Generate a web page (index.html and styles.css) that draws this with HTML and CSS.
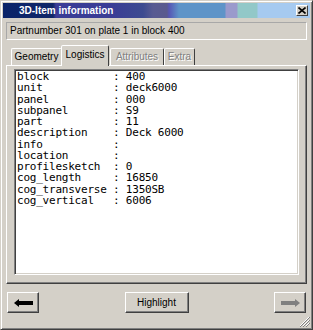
FILE: index.html
```html
<!DOCTYPE html>
<html lang="en">
<head>
    <meta charset="UTF-8">
    <title>3D-Item information</title>
    <link rel="stylesheet" href="styles.css">
</head>
<body>
<div class="window">
    <div class="titlebar">
        <span class="title">3D-Item information</span>
        <button class="close">
            <svg width="8" height="7" viewBox="0 0 8 7"><path d="M0.5 0.5 L7.5 6.5 M7.5 0.5 L0.5 6.5" stroke="#000" stroke-width="1.6"/></svg>
        </button>
    </div>
    <div class="content">
        <div class="status">Partnumber 301 on plate 1 in block 400</div>
        <div class="tabs">
            <div class="tab tab-geometry">Geometry</div>
            <div class="tab tab-logistics active">Logistics</div>
            <div class="tab tab-attributes disabled">Attributes</div>
            <div class="tab tab-extra disabled">Extra</div>
        </div>
        <div class="panel">
<pre class="list">block          : 400
unit           : deck6000
panel          : 000
subpanel       : S9
part           : 11
description    : Deck 6000
info           :
location       :
profilesketch  : 0
cog_length     : 16850
cog_transverse : 1350SB
cog_vertical   : 6006</pre>
        </div>
        <div class="buttons">
            <button class="btn btn-arrow">
                <svg width="19" height="8" viewBox="0 0 19 8"><path d="M0 4 L5 0 L5 2 L19 2 L19 6 L5 6 L5 8 Z" fill="#000"/></svg>
            </button>
            <button class="btn btn-text">Highlight</button>
            <button class="btn btn-arrow">
                <svg width="19" height="8" viewBox="0 0 19 8"><path d="M19 4 L14 0 L14 2 L0 2 L0 6 L14 6 L14 8 Z" fill="#808080"/></svg>
            </button>
        </div>
    </div>
    <div class="grip">
        <svg width="11" height="11" viewBox="0 0 11 11">
            <path d="M10 1 L1 10 M10 4 L4 10 M10 7 L7 10" stroke="#fff" stroke-width="1"/>
            <path d="M11 1 L1 11 M11 4 L4 11 M11 7 L7 11" stroke="#808080" stroke-width="1"/>
        </svg>
    </div>
</div>
</body>
</html>
```
FILE: styles.css
```css
* {
    margin: 0;
    padding: 0;
    box-sizing: border-box;
}
body {
    background: #d4d0c8;
    font-family: "Liberation Sans", Arial, sans-serif;
    font-size: 10px;
}
.window {
    position: relative;
    width: 313px;
    height: 330px;
    background: #d4d0c8;
    border: 1px solid;
    border-color: #d4d0c8 #404040 #404040 #d4d0c8;
    box-shadow: inset 1px 1px 0 #fff, inset -1px -1px 0 #808080;
    padding: 2px;
    display: flex;
    flex-direction: column;
}
.titlebar {
    height: 15px;
    display: flex;
    align-items: center;
    justify-content: space-between;
    padding: 0 2px 0 16px;
    background: linear-gradient(to right, #0a246a 0, #102668 50px, #3a3c96 53px, #3a3c96 107px, #3c4a90 140px, #585a92 150px, #5a5a8e 164px, #5656b4 166px, #5e94c8 176px, #5e94c8 222px, #9a9acc 223px, #9a9acc 234px, #92c8c8 235px, #92c8c8 254px, #a6caf0 255px);
}
.title {
    color: #fff;
    font-weight: bold;
    font-size: 10px;
}
.close {
    width: 12px;
    height: 11px;
    background: #d4d0c8;
    border: 1px solid;
    border-color: #fff #404040 #404040 #fff;
    display: flex;
    align-items: center;
    justify-content: center;
}
.content {
    flex: 1;
    padding: 4px 3px 0 3px;
    display: flex;
    flex-direction: column;
}
.status {
    height: 18px;
    border: 1px solid;
    border-color: #a8a8a8 #fff #fff #a8a8a8;
    padding: 0 3px;
    line-height: 16px;
    font-size: 10px;
    color: #000;
    white-space: nowrap;
}
.tabs {
    display: flex;
    align-items: flex-end;
    height: 20px;
    margin-top: 5px;
    padding-left: 5px;
    position: relative;
    z-index: 1;
}
.tab {
    height: 17px;
    line-height: 15px;
    text-align: center;
    border: 1px solid;
    border-bottom: none;
    border-color: #fff #404040 transparent #fff;
    border-radius: 2px 2px 0 0;
    font-size: 10px;
    color: #000;
}
.tab-geometry { width: 51px; }
.tab-logistics { width: 48px; }
.tab-attributes { width: 54px; }
.tab-extra { width: 31px; }
.tab.active {
    height: 21px;
    line-height: 17px;
    margin: 0 -1px -1px -1px;
    width: 48px;
    background: #d4d0c8;
}
.tab.active + .tab {
    margin-left: 2px;
}
.tab.disabled {
    color: #808080;
    text-shadow: 1px 1px 0 #fff;
}
.panel {
    height: 219px;
    border: 1px solid;
    border-color: #fff #404040 #404040 #fff;
    box-shadow: inset -1px -1px 0 #808080;
    padding: 3px 7px 8px 7px;
    display: flex;
}
.list {
    flex: 1;
    background: #fff;
    border: 1px solid;
    border-color: #808080 #fff #fff #808080;
    box-shadow: inset 1px 1px 0 #404040, inset -1px -1px 0 #d4d0c8;
    padding: 1px 2px;
    font-family: "DejaVu Sans Mono", "Liberation Mono", monospace;
    font-size: 11px;
    letter-spacing: -0.22px;
    line-height: 11.25px;
    color: #000;
}
.buttons {
    display: flex;
    justify-content: space-between;
    padding: 0 1px;
    margin-top: 8px;
}
.btn {
    height: 21px;
    background: #d4d0c8;
    border: 1px solid;
    border-color: #fff #404040 #404040 #fff;
    box-shadow: inset -1px -1px 0 #808080;
    font-family: "Liberation Sans", Arial, sans-serif;
    font-size: 10px;
    color: #000;
    display: flex;
    align-items: center;
    justify-content: center;
}
.btn-arrow {
    width: 32px;
}
.btn-text {
    width: 64px;
}
.grip {
    position: absolute;
    right: 2px;
    bottom: 2px;
    width: 11px;
    height: 11px;
}
.grip svg {
    display: block;
}
```
